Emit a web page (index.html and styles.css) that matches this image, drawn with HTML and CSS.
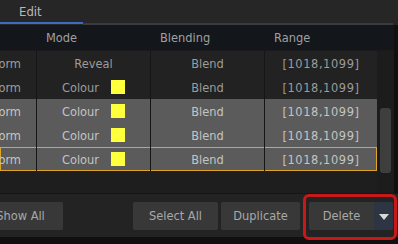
FILE: index.html
```html
<!doctype html>
<html lang="en">
  <head>
    <meta charset="UTF-8" />
    <title>Layers</title>
    <link rel="stylesheet" href="styles.css">
  </head>
  <body>
    <div class="tabbar">
      <span class="tab">Edit</span>
    </div>
    <div class="tabline">
      <span class="tabline-active"></span>
      <span class="tabline-rest"></span>
    </div>

    <div class="grid">
      <div class="head">
        <span class="hcell"></span>
        <span class="hcell">Mode</span>
        <span class="hcell">Blending</span>
        <span class="hcell">Range</span>
        <span class="hcell"></span>
      </div>
      <div class="body">
        <div class="rows">
          <div class="row">
            <span class="cell first">Transform</span>
            <span class="cell">Reveal</span>
            <span class="cell">Blend</span>
            <span class="cell range">[1018,1099]</span>
          </div>
          <div class="row">
            <span class="cell first">Transform</span>
            <span class="cell">Colour <i class="swatch"></i></span>
            <span class="cell">Blend</span>
            <span class="cell range">[1018,1099]</span>
          </div>
          <div class="row selected">
            <span class="cell first">Transform</span>
            <span class="cell">Colour <i class="swatch"></i></span>
            <span class="cell">Blend</span>
            <span class="cell range">[1018,1099]</span>
          </div>
          <div class="row selected">
            <span class="cell first">Transform</span>
            <span class="cell">Colour <i class="swatch"></i></span>
            <span class="cell">Blend</span>
            <span class="cell range">[1018,1099]</span>
          </div>
          <div class="row selected current">
            <span class="cell first">Transform</span>
            <span class="cell">Colour <i class="swatch"></i></span>
            <span class="cell">Blend</span>
            <span class="cell range">[1018,1099]</span>
          </div>
        </div>
        <div class="scrollbar">
          <div class="thumb"></div>
        </div>
      </div>
    </div>

    <div class="footer">
      <button class="btn show-all">Show All</button>
      <span class="spacer"></span>
      <button class="btn select-all">Select All</button>
      <button class="btn duplicate">Duplicate</button>
      <div class="split">
        <button class="btn delete">Delete</button>
        <button class="btn arrow"><svg width="10" height="6" viewBox="0 0 10 6"><path d="M0 0h10L5 6z" fill="#d8d8d8"/></svg></button>
        <span class="highlight"></span>
      </div>
    </div>
  </body>
</html>
```

FILE: styles.css
```css
body {
  margin: 0;
  width: 398px;
  height: 244px;
  overflow: hidden;
  background: #101010;
  font-family: "DejaVu Sans", sans-serif;
  font-stretch: condensed;
  font-size: 12.7px;
  color: #a0a0a0;
}
.tabbar {
  height: 22px;
  background: #262626;
  display: flex;
  align-items: center;
}
.tab {
  margin-left: 19px;
  font-size: 13px;
  color: #b8b8b8;
}
.tabline {
  display: flex;
  height: 3px;
  background: #262626;
}
.tabline-active {
  width: 83px;
  height: 2px;
  background: #3a6cc0;
}
.tabline-rest {
  width: 310px;
  height: 2px;
  margin-top: 1px;
  background: #3b3b3b;
}
.grid {
  width: 394px;
  background: #1e1e1e;
}
.head {
  display: grid;
  grid-template-columns: 37px 114px 114px 112px 17px;
  height: 25px;
  background: #13161a;
  border-bottom: 1px solid #1a1a1a;
}
.hcell {
  line-height: 25px;
  padding-left: 9px;
  white-space: nowrap;
}
.body {
  display: flex;
  height: 142px;
}
.rows {
  width: 377px;
}
.row {
  display: grid;
  grid-template-columns: 37px 114px 114px 112px;
  height: 24px;
  background: #222222;
  color: #9c9c9c;
}
.row.selected {
  background: #5b5b5b;
  color: #c4c4c4;
}
.row.current {
  box-shadow: inset 0 0 0 1px #e0a526;
}
.cell {
  display: flex;
  align-items: center;
  justify-content: center;
  gap: 12px;
  border-right: 1px solid #161616;
  white-space: nowrap;
  overflow: hidden;
}
.cell:last-child {
  border-right: none;
}
.cell.first {
  justify-content: flex-end;
  padding-right: 15px;
}
.range {
  letter-spacing: 0.6px;
}
.swatch {
  width: 14px;
  height: 14px;
  background: #ffff3c;
}
.scrollbar {
  width: 17px;
  background: #1c1c1c;
}
.thumb {
  width: 11px;
  height: 65px;
  margin: 57px 0 0 3px;
  border-radius: 3px;
  background: #3e3e3e;
}
.footer {
  display: flex;
  align-items: center;
  height: 43px;
  border-top: 1px solid #151515;
  background: #232323;
}
.btn {
  height: 28px;
  border: none;
  border-radius: 2px;
  background: #383838;
  color: #a8a8a8;
  font: inherit;
  padding: 0;
}
.show-all {
  width: 85px;
  margin-left: -22px;
}
.spacer {
  flex: 1;
}
.select-all {
  width: 85px;
}
.duplicate {
  width: 79px;
  margin-left: 3px;
}
.split {
  position: relative;
  display: flex;
  margin: 0 5px 0 9px;
}
.delete {
  width: 65px;
  border-radius: 2px 0 0 2px;
}
.arrow {
  width: 19px;
  border-radius: 0 2px 2px 0;
  background: #2e3542;
}
.highlight {
  position: absolute;
  left: -6px;
  top: -8px;
  right: -4px;
  bottom: -10px;
  border: 3px solid #c8181a;
  border-radius: 6px;
}
```
